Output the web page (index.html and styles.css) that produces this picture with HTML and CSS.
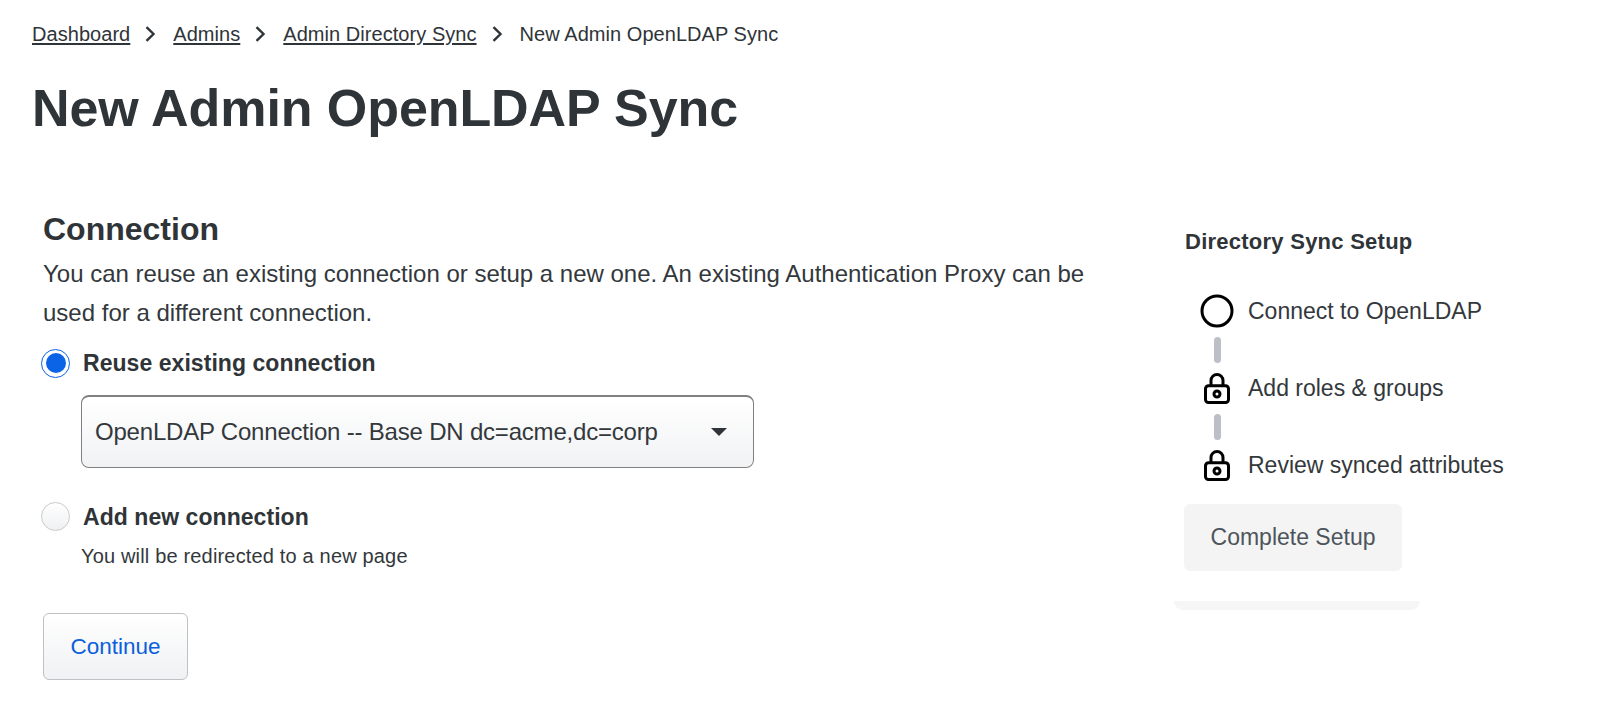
FILE: index.html
```html
<!DOCTYPE html>
<html lang="en">
<head>
<meta charset="utf-8">
<title>New Admin OpenLDAP Sync</title>
<link rel="stylesheet" href="styles.css">
</head>
<body>
<nav class="crumbs">
  <a href="#">Dashboard</a>
  <svg class="chev" viewBox="0 0 13 16"><path d="M2.500 1.200l7 6.800-7 6.800" /></svg>
  <a href="#">Admins</a>
  <svg class="chev" viewBox="0 0 13 16"><path d="M2.500 1.200l7 6.800-7 6.800" /></svg>
  <a href="#">Admin Directory Sync</a>
  <svg class="chev" viewBox="0 0 13 16"><path d="M2.500 1.200l7 6.800-7 6.800" /></svg>
  <span>New Admin OpenLDAP Sync</span>
</nav>
<h1 class="title">New Admin OpenLDAP Sync</h1>
<div class="layout">
  <main class="form">
    <h2 class="heading">Connection</h2>
    <p class="intro">You can reuse an existing connection or setup a new one. An existing Authentication Proxy can be used for a different connection.</p>
    <div class="option">
      <span class="radio radio-on"><span class="dot"></span></span>
      <span class="label">Reuse existing connection</span>
    </div>
    <div class="select">
      <span>OpenLDAP Connection -- Base DN dc=acme,dc=corp</span>
      <span class="caret"></span>
    </div>
    <div class="option option-new">
      <span class="radio"></span>
      <span class="label">Add new connection</span>
    </div>
    <p class="note">You will be redirected to a new page</p>
    <button class="continue" type="button">Continue</button>
  </main>
  <aside class="side">
    <h3 class="side-title">Directory Sync Setup</h3>
    <ul class="steps">
      <li class="step">
        <span class="step-icon"><svg width="36" height="36" viewBox="0 0 36 36"><circle cx="18" cy="18" r="15" class="ring"/></svg></span>
        <span class="step-text">Connect to OpenLDAP</span>
      </li>
      <li class="bar"></li>
      <li class="step">
        <span class="step-icon"><svg width="36" height="36" viewBox="0 0 36 36"><path class="lock" d="M12 16v-5.500a6 6 0 0 1 12 0V16"/><rect class="lock" x="6.500" y="15.800" width="23" height="16.700" rx="3"/><circle class="lock" cx="18" cy="24" r="3"/></svg></span>
        <span class="step-text">Add roles &amp; groups</span>
      </li>
      <li class="bar"></li>
      <li class="step">
        <span class="step-icon"><svg width="36" height="36" viewBox="0 0 36 36"><path class="lock" d="M12 16v-5.500a6 6 0 0 1 12 0V16"/><rect class="lock" x="6.500" y="15.800" width="23" height="16.700" rx="3"/><circle class="lock" cx="18" cy="24" r="3"/></svg></span>
        <span class="step-text">Review synced attributes</span>
      </li>
    </ul>
    <button class="complete" type="button">Complete Setup</button>
    <div class="strip"></div>
  </aside>
</div>
</body>
</html>
```
FILE: styles.css
```css
* { box-sizing: border-box; }
html, body { margin: 0; height: 711px; overflow: hidden; background: #fff; }
body { font-family: "Liberation Sans", Arial, sans-serif; color: #2f3438; padding: 0 32px; }
.crumbs { display: flex; align-items: center; height: 24px; margin-top: 22px; font-size: 20px; letter-spacing: 0.050px; gap: 15px; color: #2f3438; }
.crumbs a { color: #2f3438; text-decoration: underline; text-underline-offset: 2px; }
.chev { width: 13px; height: 16px; margin-left: -1px; margin-right: 1px; }
.chev path { fill: none; stroke: #2f3438; stroke-width: 2.400; }
.title { margin: 30px 0 0; font-size: 52px; letter-spacing: -0.080px; line-height: 64px; font-weight: 700; color: #2f3438; }
.layout { display: flex; margin-top: 69px; }
.form { width: 1152px; padding-left: 11px; padding-right: 80px; flex: none; }
.heading { margin: 0; font-size: 32px; line-height: 40px; font-weight: 700; }
.intro { margin: 5px 0 0; font-size: 24px; line-height: 39px; color: #33383c; }
.option { display: flex; align-items: center; gap: 13px; height: 30px; margin-top: 16px; margin-left: -2px; }
.label { font-size: 23px; font-weight: 700; letter-spacing: 0.050px; }
.radio { width: 29px; height: 29px; border-radius: 50%; border: 1px solid #c8cacc; background: linear-gradient(#fff, #eef0f2); display: flex; align-items: center; justify-content: center; flex: none; }
.radio-on { border-color: #0b63e5; background: #fff; }
.dot { width: 20px; height: 20px; border-radius: 50%; background: #0b63e5; }
.select { display: flex; align-items: center; justify-content: space-between; width: 673px; height: 73px; margin: 17px 0 0 38px; padding: 0 26px 0 13px; border: 1px solid #808080; border-top-width: 2px; border-radius: 8px; background: linear-gradient(#fff, #f1f2f4); font-size: 24px; letter-spacing: -0.200px; color: #33383c; }
.caret { width: 0; height: 0; border-left: 8px solid transparent; border-right: 8px solid transparent; border-top: 8px solid #2f3438; }
.option-new { margin-top: 33px; }
.option-new .label { padding-top: 2px; }
.note { margin: 12px 0 0 38px; font-size: 20px; letter-spacing: 0.170px; line-height: 26px; color: #33383c; }
.continue { display: block; width: 145px; height: 67px; margin-top: 44px; border: 1px solid #bfc1c5; border-radius: 6px; background: linear-gradient(#fff, #eff1f3); color: #0b5fdc; font: 22.500px "Liberation Sans", Arial, sans-serif; padding: 0; }
.side { width: 246px; margin-left: -10px; padding-top: 20px; flex: none; }
.side-title { margin: 0 0 0 11px; font-size: 22px; letter-spacing: 0.250px; line-height: 26px; font-weight: 700; white-space: nowrap; }
.steps { list-style: none; margin: 38px 0 0 25px; padding: 0; font-size: 23px; color: #33383c; }
.step { display: flex; align-items: center; gap: 13px; height: 36px; white-space: nowrap; }
.step-text { padding-top: 1px; }
.step-icon { width: 36px; height: 36px; flex: none; }
.ring { fill: none; stroke: #000; stroke-width: 3; }
.lock { fill: none; stroke: #000; stroke-width: 3; }
.bar { width: 7px; height: 26px; margin: 8px 0 7px 15px; border-radius: 4px; background: #bcc0c6; }
.complete { display: block; width: 218px; height: 67px; margin: 21px 0 0 10px; border: 0; border-radius: 6px; background: #f4f4f4; color: #4d555c; font: 23px "Liberation Sans", Arial, sans-serif; padding: 0; }
.strip { height: 9px; margin-top: 30px; border-radius: 0 0 10px 10px; background: #f6f6f6; }
```
